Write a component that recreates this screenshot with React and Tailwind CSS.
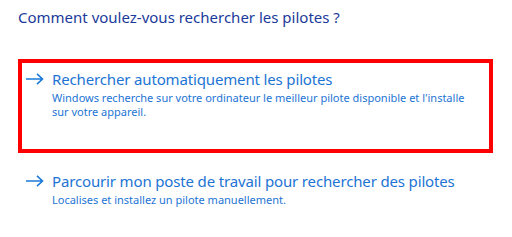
import React from "react";

function Arrow() {
    return (
        <svg width="18" height="12" viewBox="0 0 18 12" className="shrink-0">
            <path d="M0 6 H16.5 M11 0.8 L16.5 6 L11 11.2" fill="none" stroke="#1a7ad8" strokeWidth="1.6" />
        </svg>
    );
}

function Option({ title, desc }) {
    return (
        <div className="flex items-start">
            <div className="pt-[4px] w-[26px] shrink-0">
                <Arrow />
            </div>
            <div>
                <div className="text-[15px] leading-[20px] tracking-[-0.15px] text-[#1c74d4]">{title}</div>
                <div className="text-[11px] leading-[14px] text-[#1c74d4] mt-[2px]">{desc}</div>
            </div>
        </div>
    );
}

export default function App() {
    return (
        <div className="w-[512px] h-[237px] bg-white pl-[18px] pt-[7px]" style={{ fontFamily: '"Noto Sans", "Open Sans", sans-serif' }}>
            <h1 className="text-[15px] leading-[20px] text-[#1b3a9a]">Comment voulez-vous rechercher les pilotes ?</h1>

            {/* highlighted option */}
            <div className="mt-[32px] w-[475px] h-[94px] border-4 border-[#ff0000] pl-[4px] pt-[6px] pr-[12px]">
                <Option
                    title="Rechercher automatiquement les pilotes"
                    desc="Windows recherche sur votre ordinateur le meilleur pilote disponible et l'installe sur votre appareil."
                />
            </div>

            <div className="mt-[18px] pl-[8px]">
                <Option
                    title="Parcourir mon poste de travail pour rechercher des pilotes"
                    desc="Localises et installez un pilote manuellement."
                />
            </div>
        </div>
    );
}
